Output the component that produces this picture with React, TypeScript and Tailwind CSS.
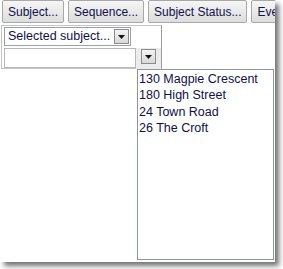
import React from "react";

const font = { fontFamily: '"Liberation Sans", Arial, sans-serif' };

/* ── Small arrow box used by the combo controls ───────── */
function ArrowBox({ className = "" }: { className?: string }) {
  return (
    <div
      className={`flex items-center justify-center border border-[#8c8c8c] bg-gradient-to-b from-[#f4f4f4] to-[#d8d8d8] ${className}`}
    >
      <svg width="7" height="4" viewBox="0 0 7 4">
        <polygon points="0,0 7,0 3.5,4" fill="#111" />
      </svg>
    </div>
  );
}

const tabs = ["Subject...", "Sequence...", "Subject Status...", "Events..."];
const addresses = ["130 Magpie Crescent", "180 High Street", "24 Town Road", "26 The Croft"];

export default function App() {
  return (
    <div className="w-[283px] h-[269px] bg-white" style={font}>
      <div className="w-[275px] h-[262px] bg-white overflow-hidden shadow-[4px_4px_5px_rgba(0,0,0,0.55)] text-[12px] text-[#10104a]">
        {/* toolbar */}
        <div className="flex gap-[4px] pl-[2px] h-[25px] overflow-hidden whitespace-nowrap">
          {tabs.map((t) => (
            <div
              key={t}
              className="shrink-0 h-[23px] px-[5px] flex items-center border border-[#a8a8a8] rounded-[2px] bg-gradient-to-b from-[#f6f6f6] to-[#dddddd] leading-none"
            >
              {t}
            </div>
          ))}
        </div>

        {/* filter panel */}
        <div className="ml-[1px] w-[161px] h-[44px] border border-[#c4c4c4] border-r-[#9a9a9a] pt-[1px]">
          <div className="ml-[2px] w-[127px] h-[19px] border border-[#9aa0a8] flex items-center justify-between pl-[3px] pr-[1px] bg-white">
            <span className="text-[12.5px] leading-none">Selected subject...</span>
            <ArrowBox className="w-[15px] h-[15px]" />
          </div>
          <div className="flex mt-[2px]">
            <div className="ml-[2px] w-[132px] h-[20px] border border-[#b8b8b8] bg-white" />
            <div className="flex-1 h-[21px] bg-[#ececec] flex items-start justify-center pt-[1px]">
              <ArrowBox className="w-[15px] h-[15px]" />
            </div>
          </div>
        </div>

        {/* address list */}
        <div className="ml-[137px] w-[137px] h-[191px] border border-[#8a94a2] pl-[1px] pt-[1px] text-[12.5px] leading-[16.3px]">
          {addresses.map((a) => (
            <div key={a} className="whitespace-nowrap">
              {a}
            </div>
          ))}
        </div>
      </div>
    </div>
  );
}
